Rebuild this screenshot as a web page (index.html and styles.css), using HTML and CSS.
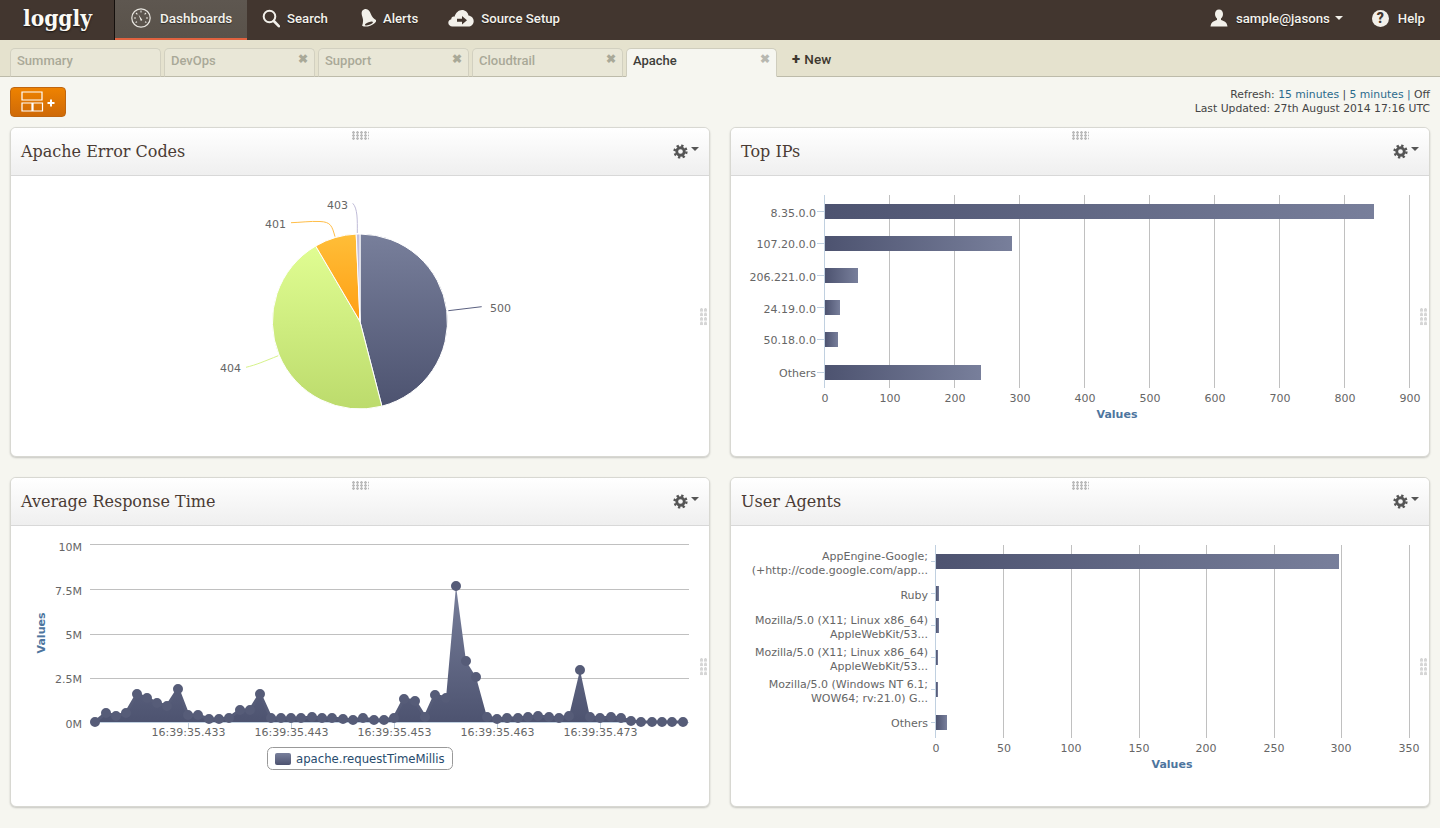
FILE: index.html
```html
<!DOCTYPE html>
<html lang="en">
<head>
<meta charset="utf-8">
<title>Loggly Dashboards</title>
<link rel="stylesheet" href="styles.css">
</head>
<body>
<svg class="defs" width="0" height="0" aria-hidden="true">
  <defs>
    <linearGradient id="barH" x1="0" y1="0" x2="1" y2="0"><stop offset="0" stop-color="#4d5370"/><stop offset="1" stop-color="#787f9b"/></linearGradient>
    <linearGradient id="slate" x1="0" y1="0" x2="0" y2="1"><stop offset="0" stop-color="#787f9b"/><stop offset="1" stop-color="#4d5370"/></linearGradient>
    <linearGradient id="lime" x1="0" y1="0" x2="0" y2="1"><stop offset="0" stop-color="#e0fd92"/><stop offset="1" stop-color="#bcdb6c"/></linearGradient>
    <linearGradient id="amber" x1="0" y1="0" x2="0" y2="1"><stop offset="0" stop-color="#ffbe38"/><stop offset="1" stop-color="#ff9f14"/></linearGradient>
  </defs>
</svg>

<header class="topbar">
  <div class="logo">loggly</div>
  <a class="nav-item active">
    <svg class="ico" width="20" height="20" viewBox="0 0 20 20"><circle cx="10" cy="10" r="9.2" fill="none" stroke="#e8e6e0" stroke-width="1.2"/><path d="M10 2.6v2M3 10h2M15 10h2M5 5l1.4 1.4M15 5l-1.4 1.4M4.6 14.5l1.4-.8M15.4 14.5l-1.4-.8" stroke="#e8e6e0" stroke-width="1.1" fill="none"/><path d="M7.5 6.5l3.8 5.6-1.4.9z" fill="#f4f2ec"/></svg>
    <span>Dashboards</span>
  </a>
  <a class="nav-item">
    <svg class="ico" width="18" height="20" viewBox="0 0 18 20"><circle cx="7.5" cy="8.5" r="5.8" fill="none" stroke="#f2f0ea" stroke-width="2"/><path d="M11.8 13l5 5.2" stroke="#f2f0ea" stroke-width="2.6" stroke-linecap="round"/></svg>
    <span>Search</span>
  </a>
  <a class="nav-item">
    <svg class="ico" width="18" height="20" viewBox="0 0 18 20"><g transform="rotate(-20 9 10)"><path d="M9.500 .8C6 .8 5 4 5 7.500 5 11 3.500 13.500 1.800 15.500c1.500 1.800 3.800 2.800 7.700 2.800s6.200-1 7.700-2.800C15.500 13.500 14 11 14 7.500 14 4 13 .8 9.500 .8z" fill="#f2f0ea"/><ellipse cx="9" cy="15.800" rx="4.200" ry="1.300" fill="#42362f"/></g></svg>
    <span>Alerts</span>
  </a>
  <a class="nav-item">
    <svg class="ico" width="26" height="20" viewBox="0 0 26 20"><path d="M4.500 18.500C2 18.500.3 16.800.3 14.800c0-1.800 1.200-3.200 3-3.600-.1-1.800 1.500-3 3.200-2.500C7.800 4.800 10.500 2 14 2c3.300 0 6 2.400 6.500 5.600 3 .4 5.200 2.700 5.200 5.600 0 3-2.500 5.300-5.500 5.300z" fill="#f2f0ea"/><path d="M9 10.800h5V8l5 4.300-5 4.300v-2.900H9z" fill="#42362f"/></svg>
    <span>Source Setup</span>
  </a>
  <div class="nav-right">
    <a class="nav-user">
      <svg class="ico" width="18" height="18" viewBox="0 0 18 18"><path d="M9 .5c2.500 0 4 2 4 4.500 0 2-1 3.600-2 4.500v1.500c2.500 1 6 1.700 6.500 6.500H.5c.5-4.800 4-5.500 6.500-6.500V9.500C6 8.600 5 7 5 5 5 2.500 6.500.5 9 .5z" fill="#f2f0ea"/></svg>
      <span>sample@jasons</span><i class="caret light"></i>
    </a>
    <a class="nav-help">
      <span class="help-dot">?</span>
      <span>Help</span>
    </a>
  </div>
</header>

<nav class="tabs">
  <a class="tab"><span>Summary</span></a>
  <a class="tab"><span>DevOps</span><b class="close">✖</b></a>
  <a class="tab"><span>Support</span><b class="close">✖</b></a>
  <a class="tab"><span>Cloudtrail</span><b class="close">✖</b></a>
  <a class="tab current"><span>Apache</span><b class="close">✖</b></a>
  <a class="tab-new"><b>+</b> New</a>
</nav>

<main class="content">
  <div class="toolbar">
    <button class="add-btn" type="button" aria-label="Add widget">
      <svg width="36" height="22" viewBox="0 0 36 22"><path d="M1 1h20v8H1zM1 12h10v8H1zM12 12h9.500v8H12z" fill="none" stroke="#fff" stroke-width="1.200"/><path d="M26.500 12h7M30 8.500v7" stroke="#fff" stroke-width="2"/></svg>
    </button>
    <div class="meta">
      <div>Refresh: <a>15 minutes</a> | <a>5 minutes</a> <a>|</a> Off</div>
      <div>Last Updated: 27th August 2014 17:16 UTC</div>
    </div>
  </div>

  <section class="grid">
    <article class="panel">
      <i class="grip-top"></i><i class="grip-side"></i>
      <header class="panel-head"><h2>Apache Error Codes</h2><div class="gear"><svg viewBox="0 0 16 16"><circle cx="8" cy="8" r="4" fill="none" stroke="#555" stroke-width="3"/><circle cx="8" cy="8" r="6.300" fill="none" stroke="#555" stroke-width="2.600" stroke-dasharray="2.470 2.470"/></svg><i class="caret"></i></div></header>
      <svg class="chart" viewBox="11 176 698 280" width="698" height="280">
        <g fill="none" stroke-width="1">
          <path d="M448.300 310.700L481.700 306.700" stroke="#5a6080"/>
          <path d="M278.300 355.700C265 361 256 365 246 367.300" stroke="#d6f28a"/>
          <path d="M335 236.700C332 226 331 222 320 221.500 310 221 300 222.500 291 222.700" stroke="#ffbe48"/>
          <path d="M357.300 233C357.500 220 357.500 208 352.700 203.300" stroke="#c0bcd8"/>
        </g>
        <g stroke="#fff" stroke-width="1">
          <path d="M360 321.500V234A87.500 87.500 0 0 1 381.900 406.200z" fill="url(#slate)"/>
          <path d="M360 321.500L381.900 406.200A87.500 87.500 0 0 1 315.700 246z" fill="url(#lime)"/>
          <path d="M360 321.500L315.700 246A87.500 87.500 0 0 1 356.200 234.100z" fill="url(#amber)"/>
          <path d="M360 321.500L356.200 234.100A87.500 87.500 0 0 1 360 234z" fill="#c4c0dc"/>
        </g>
        <text class="lbl" x="490" y="312">500</text>
        <text class="lbl" x="220" y="372">404</text>
        <text class="lbl" x="265" y="228">401</text>
        <text class="lbl" x="327" y="209">403</text>
      </svg>
    </article>

    <article class="panel">
      <i class="grip-top"></i><i class="grip-side"></i>
      <header class="panel-head"><h2>Top IPs</h2><div class="gear"><svg viewBox="0 0 16 16"><circle cx="8" cy="8" r="4" fill="none" stroke="#555" stroke-width="3"/><circle cx="8" cy="8" r="6.300" fill="none" stroke="#555" stroke-width="2.600" stroke-dasharray="2.470 2.470"/></svg><i class="caret"></i></div></header>
      <svg class="chart" viewBox="731 176 698 280" width="698" height="280">
        <path class="gridline" d="M889.500 195V388M954.500 195V388M1019.500 195V388M1084.500 195V388M1149.500 195V388M1214.500 195V388M1279.500 195V388M1344.500 195V388M1409.500 195V388"/>
        <path class="axis" d="M824.500 195V388M817 211.500h7M817 243.500h7M817 275.500h7M817 307.500h7M817 339.500h7M817 372.500h7"/>
        <g fill="url(#barH)">
          <rect x="825" y="204" width="549" height="15"/>
          <rect x="825" y="236" width="187" height="15"/>
          <rect x="825" y="268" width="33" height="15"/>
          <rect x="825" y="300" width="15" height="15"/>
          <rect x="825" y="332" width="13" height="15"/>
          <rect x="825" y="365" width="156" height="15"/>
        </g>
        <g class="lbl end">
          <text x="816" y="217">8.35.0.0</text>
          <text x="816" y="248">107.20.0.0</text>
          <text x="816" y="281">206.221.0.0</text>
          <text x="816" y="313">24.19.0.0</text>
          <text x="816" y="344">50.18.0.0</text>
          <text x="816" y="377">Others</text>
        </g>
        <g class="lbl mid">
          <text x="825" y="402">0</text><text x="890" y="402">100</text><text x="955" y="402">200</text><text x="1020" y="402">300</text><text x="1085" y="402">400</text><text x="1150" y="402">500</text><text x="1215" y="402">600</text><text x="1280" y="402">700</text><text x="1345" y="402">800</text><text x="1410" y="402">900</text>
        </g>
        <text class="axis-title mid" x="1117" y="417.500">Values</text>
      </svg>
    </article>

    <article class="panel">
      <i class="grip-top"></i><i class="grip-side"></i>
      <header class="panel-head"><h2>Average Response Time</h2><div class="gear"><svg viewBox="0 0 16 16"><circle cx="8" cy="8" r="4" fill="none" stroke="#555" stroke-width="3"/><circle cx="8" cy="8" r="6.300" fill="none" stroke="#555" stroke-width="2.600" stroke-dasharray="2.470 2.470"/></svg><i class="caret"></i></div></header>
      <svg class="chart" viewBox="11 526 698 280" width="698" height="280">
        <linearGradient id="areaFill" gradientUnits="userSpaceOnUse" x1="0" y1="586" x2="0" y2="722"><stop offset="0" stop-color="#787f9b"/><stop offset="1" stop-color="#4d5370"/></linearGradient>
        <path class="gridline" d="M90 544.500H689M90 589.500H689M90 634.500H689M90 678.500H689"/>
        <path class="axis" d="M90 722.500H689M188.500 722v7M291.500 722v7M394.500 722v7M497.500 722v7M600.500 722v7"/>
        <path fill="url(#areaFill)" d="M95 722L106 713 116 716 126 713 137 694 147 698 157 703 167 706 178 689 188 715 198 715 209 719 219 719 229 718 240 710 250 710 260 694 271 718 281 718 291 718 301 718 312 717 322 718 332 718 343 719 353 720 363 718 374 720 384 720 394 718 404 699 415 701 425 717 435 695 446 698 456 586 466 661 476 677 487 717 497 719 507 718 518 718 528 717 538 716 549 717 559 718 569 716 580 670 590 717 600 718 611 717 621 718 631 722z"/>
        <path class="trend" d="M95 722L106 713 116 716 126 713 137 694 147 698 157 703 167 706 178 689 188 715 198 715 209 719 219 719 229 718 240 710 250 710 260 694 271 718 281 718 291 718 301 718 312 717 322 718 332 718 343 719 353 720 363 718 374 720 384 720 394 718 404 699 415 701 425 717 435 695 446 698M487 717L497 719 507 718 518 718 528 717 538 716 549 717 559 718 569 716M590 717L600 718 611 717 621 718 631 721 641 722 652 722 662 722 672 722 683 722"/>
        <path class="dots" d="M95 722h0M106 713h0M116 716h0M126 713h0M137 694h0M147 698h0M157 703h0M167 706h0M178 689h0M188 715h0M198 715h0M209 719h0M219 719h0M229 718h0M240 710h0M250 710h0M260 694h0M271 718h0M281 718h0M291 718h0M301 718h0M312 717h0M322 718h0M332 718h0M343 719h0M353 720h0M363 718h0M374 720h0M384 720h0M394 718h0M404 699h0M415 701h0M425 717h0M435 695h0M446 698h0M456 586h0M466 661h0M476 677h0M487 717h0M497 719h0M507 718h0M518 718h0M528 717h0M538 716h0M549 717h0M559 718h0M569 716h0M580 670h0M590 717h0M600 718h0M611 717h0M621 718h0M631 721h0M641 722h0M652 722h0M662 722h0M672 722h0M683 722h0"/>
        <g class="lbl end">
          <text x="82" y="551">10M</text>
          <text x="82" y="595">7.5M</text>
          <text x="82" y="639">5M</text>
          <text x="82" y="683">2.5M</text>
          <text x="82" y="728">0M</text>
        </g>
        <g class="lbl mid">
          <text x="188.500" y="736">16:39:35.433</text>
          <text x="291.500" y="736">16:39:35.443</text>
          <text x="394.500" y="736">16:39:35.453</text>
          <text x="497.500" y="736">16:39:35.463</text>
          <text x="600.500" y="736">16:39:35.473</text>
        </g>
        <text class="axis-title mid" transform="translate(45 633) rotate(-90)">Values</text>
        <rect x="267.500" y="747.500" width="185" height="22" rx="5" fill="#fff" stroke="#999"/>
        <rect x="275" y="753" width="16" height="12" rx="2" fill="url(#slate)"/>
        <text class="legend" x="296" y="763">apache.requestTimeMillis</text>
      </svg>
    </article>

    <article class="panel">
      <i class="grip-top"></i><i class="grip-side"></i>
      <header class="panel-head"><h2>User Agents</h2><div class="gear"><svg viewBox="0 0 16 16"><circle cx="8" cy="8" r="4" fill="none" stroke="#555" stroke-width="3"/><circle cx="8" cy="8" r="6.300" fill="none" stroke="#555" stroke-width="2.600" stroke-dasharray="2.470 2.470"/></svg><i class="caret"></i></div></header>
      <svg class="chart" viewBox="731 526 698 280" width="698" height="280">
        <path class="gridline" d="M1003.500 545V738M1071.500 545V738M1139.500 545V738M1206.500 545V738M1274.500 545V738M1341.500 545V738M1409.500 545V738"/>
        <path class="axis" d="M935.500 545V738M931 561.500h5M931 593.500h5M931 625.500h5M931 657.500h5M931 689.500h5M931 722.500h5"/>
        <g fill="url(#barH)">
          <rect x="936" y="554" width="403" height="15"/>
          <rect x="936" y="586" width="3" height="15"/>
          <rect x="936" y="618" width="3" height="15"/>
          <rect x="936" y="650" width="2" height="15"/>
          <rect x="936" y="682" width="2" height="15"/>
          <rect x="936" y="715" width="11" height="15"/>
        </g>
        <g class="lbl end">
          <text x="928" y="560">AppEngine-Google;</text>
          <text x="928" y="574">(+http://code.google.com/app...</text>
          <text x="928" y="599">Ruby</text>
          <text x="928" y="624">Mozilla/5.0 (X11; Linux x86_64)</text>
          <text x="928" y="638">AppleWebKit/53...</text>
          <text x="928" y="656">Mozilla/5.0 (X11; Linux x86_64)</text>
          <text x="928" y="670">AppleWebKit/53...</text>
          <text x="928" y="688">Mozilla/5.0 (Windows NT 6.1;</text>
          <text x="928" y="702">WOW64; rv:21.0) G...</text>
          <text x="928" y="727">Others</text>
        </g>
        <g class="lbl mid">
          <text x="936" y="752">0</text><text x="1004" y="752">50</text><text x="1071" y="752">100</text><text x="1139" y="752">150</text><text x="1206" y="752">200</text><text x="1274" y="752">250</text><text x="1341" y="752">300</text><text x="1409" y="752">350</text>
        </g>
        <text class="axis-title mid" x="1172" y="767.500">Values</text>
      </svg>
    </article>
  </section>
</main>
</body>
</html>
```

FILE: styles.css
```css
* { box-sizing: border-box; }
html, body { margin: 0; padding: 0; }
body {
  height: 828px;
  overflow: hidden;
  background: #f6f6f0;
  font-family: Roboto, "Liberation Sans", sans-serif;
  color: #444;
}
a { color: inherit; text-decoration: none; }
.defs { position: absolute; }

.topbar {
  display: flex;
  align-items: stretch;
  height: 40px;
  background: #42362f;
  color: #f4f2ec;
  font-size: 13.2px;
  font-weight: 500;
  text-shadow: 0 1px 1px rgba(0,0,0,.5);
}
.logo {
  width: 115px;
  padding-left: 23px;
  border-right: 1px solid #15100d;
  font-family: "DejaVu Serif Condensed", "DejaVu Serif", serif;
  font-weight: 700;
  font-size: 22.5px;
  line-height: 37px;
  color: #fbfaf5;
  text-shadow: 0 1px 2px rgba(0,0,0,.7);
}
.nav-item {
  display: flex;
  align-items: center;
  gap: 7px;
  padding: 0 15px 4px;
}
.nav-item.active {
  gap: 9px;
  width: 132px;
  padding: 0 0 2px 16px;
  font-size: 13.5px;
  background: linear-gradient(#5e5750, #59524a);
  border-bottom: 2px solid #e0623f;
}
.ico { flex: none; }
.nav-right {
  display: flex;
  align-items: center;
  margin-left: auto;
  padding: 0 15px 4px 0;
}
.nav-user {
  display: flex;
  align-items: center;
  gap: 8px;
  margin-right: 29px;
}
.nav-help {
  display: flex;
  align-items: center;
  gap: 9px;
}
.help-dot {
  width: 17px;
  height: 17px;
  border-radius: 50%;
  background: #f2f0ea;
  color: #42362f;
  font-weight: 900;
  font-size: 14px;
  line-height: 17px;
  text-align: center;
  text-shadow: none;
}
.caret {
  display: inline-block;
  width: 0;
  height: 0;
  border-left: 4px solid transparent;
  border-right: 4px solid transparent;
  border-top: 4px solid #555;
}
.caret.light { border-top-color: #f2f0ea; margin-left: -3px; }

.tabs {
  display: flex;
  align-items: flex-end;
  gap: 3px;
  height: 37px;
  padding-left: 10px;
  background: #e5e2ce;
  border-bottom: 1px solid #bdbbaa;
  font-size: 13px;
  font-weight: 500;
}
.tab {
  position: relative;
  display: flex;
  justify-content: space-between;
  width: 151px;
  height: 29px;
  margin-bottom: -1px;
  padding: 5px 6px 0 6px;
  background: #e9e7d7;
  border: 1px solid #d2d0c0;
  border-bottom-color: #bdbbaa;
  border-radius: 5px 5px 0 0;
  color: #a9a998;
  line-height: 14px;
}
.tab .close { font-size: 12px; line-height: 10px; color: #a9a998; }
.tab.current {
  background: #f6f6f0;
  border-color: #cfcdbd;
  border-bottom-color: #f6f6f0;
  color: #3e3e3a;
}
.tab.current .close { color: #b8b8b0; }
.tab-new {
  align-self: flex-end;
  margin: 0 0 9px 12px;
  color: #3e3830;
  line-height: 15px;
  font-size: 13.5px;
  word-spacing: 1px;
}
.tab-new b { font-size: 15px; font-weight: 900; }

.toolbar {
  display: flex;
  justify-content: space-between;
  padding: 10px 10px 0;
  height: 50px;
}
.add-btn {
  display: flex;
  align-items: center;
  justify-content: flex-start;
  width: 56px;
  height: 30px;
  padding: 0 0 0 10px;
  background: linear-gradient(#ee8200, #cf6a08);
  border: 1px solid #bf6610;
  border-radius: 4px;
}
.meta {
  font-family: "DejaVu Sans", sans-serif;
  font-size: 10.8px;
  line-height: 14px;
  text-align: right;
  color: #444;
  margin-top: 1px;
}
.meta a { color: #2a6a8c; }

.grid {
  display: grid;
  grid-template-columns: 700px 700px;
  grid-template-rows: 330px 330px;
  gap: 20px;
  padding: 0 10px;
}
.panel {
  position: relative;
  background: #fff;
  border: 1px solid #d8d8d2;
  border-radius: 6px;
  box-shadow: 0 1px 2px rgba(0,0,0,.2);
  overflow: hidden;
}
.panel-head {
  display: flex;
  align-items: center;
  justify-content: space-between;
  height: 48px;
  padding: 0 10px;
  background: linear-gradient(#fff, #efefef);
  border-bottom: 1px solid #d8d8d8;
}
.panel-head h2 {
  margin: 0;
  font-family: "DejaVu Serif", serif;
  font-weight: 400;
  font-size: 16px;
  color: #4a3b34;
}
.gear {
  display: flex;
  align-items: center;
  gap: 3px;
  margin-top: -1px;
}
.gear svg { width: 15px; height: 15px; }
.gear .caret { margin-top: -5px; }
.grip-top {
  position: absolute;
  top: 3px;
  left: 341px;
  width: 17px;
  height: 9px;
  background: radial-gradient(circle at 1.500px 1.500px, #bbb 1.200px, transparent 1.500px) 0 0 / 4px 3px;
}
.grip-side {
  position: absolute;
  top: 180px;
  right: 2px;
  width: 7px;
  height: 18px;
  background: radial-gradient(circle at 1.500px 2px, #d6d6d6 1.600px, transparent 2px) 0 0 / 4px 4.500px;
}
.chart { display: block; }
.gridline { fill: none; stroke: #c0c0c0; stroke-width: 1; }
.axis { fill: none; stroke: #c0d0e0; stroke-width: 1; }
.trend { fill: none; stroke: #565c78; stroke-width: 3; }
.dots { fill: none; stroke: #565c78; stroke-width: 10; stroke-linecap: round; }
.lbl {
  font-family: "DejaVu Sans", sans-serif;
  font-size: 11px;
  fill: #666;
}
.end { text-anchor: end; }
.mid { text-anchor: middle; }
.axis-title {
  font-family: "DejaVu Sans", sans-serif;
  font-size: 11px;
  font-weight: 700;
  fill: #4d759e;
}
.legend {
  font-family: "DejaVu Sans", sans-serif;
  font-size: 11.7px;
  fill: #274b6d;
}
```
